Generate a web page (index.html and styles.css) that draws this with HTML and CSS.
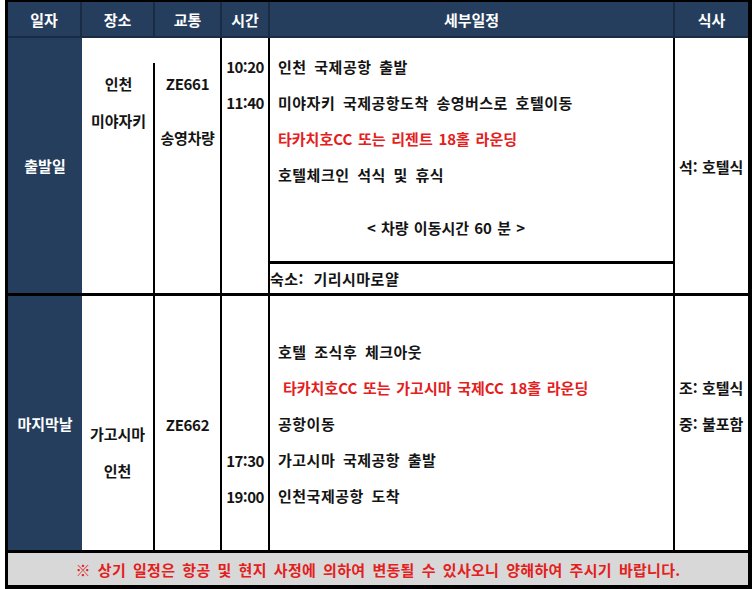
FILE: index.html
```html
<!DOCTYPE html>
<html lang="ko">
<head>
<meta charset="utf-8">
<title>일정표</title>
<link rel="stylesheet" href="styles.css">
</head>
<body>
<div class="sheet">
  <div class="h">일자</div>
  <div class="h">장소</div>
  <div class="h">교통</div>
  <div class="h">시간</div>
  <div class="h">세부일정</div>
  <div class="h h-last">식사</div>

  <div class="day">출발일</div>
  <div class="cell place place-1"><div>인천</div><div>미야자키</div></div>
  <div class="cell trans trans-1"><div>ZE661</div><div class="trans-gap">송영차량</div></div>
  <div class="cell time time-1"><div>10:20</div><div>11:40</div></div>
  <div class="cell detail detail-1">
    <div class="sched">
      <div>인천 국제공항 출발</div>
      <div>미야자키 국제공항도착 송영버스로 호텔이동</div>
      <div class="red">타카치호CC 또는 리젠트 18홀 라운딩</div>
      <div>호텔체크인 석식 및 휴식</div>
      <div class="move">&lt; 차량 이동시간 60 분 &gt;</div>
    </div>
    <div class="lodging">숙소:  기리시마로얄</div>
  </div>
  <div class="cell meal meal-1"><div>석: 호텔식</div></div>

  <div class="day">마지막날</div>
  <div class="cell place place-2"><div>가고시마</div><div>인천</div></div>
  <div class="cell trans trans-2"><div>ZE662</div></div>
  <div class="cell time time-2"><div>17:30</div><div>19:00</div></div>
  <div class="cell detail detail-2">
    <div>호텔 조식후 체크아웃</div>
    <div class="red indent">타카치호CC 또는 가고시마 국제CC 18홀 라운딩</div>
    <div>공항이동</div>
    <div>가고시마 국제공항 출발</div>
    <div>인천국제공항 도착</div>
  </div>
  <div class="cell meal meal-2"><div>조: 호텔식</div><div>중: 불포함</div></div>

  <div class="footer">※ 상기 일정은 항공 및 현지 사정에 의하여 변동될 수 있사오니 양해하여 주시기 바랍니다.</div>
</div>
</body>
</html>
```
FILE: styles.css
```css
html, body {
  margin: 0;
  padding: 0;
  background: #ffffff;
}

body {
  font-family: "Noto Sans CJK KR", "Noto Sans", sans-serif;
  font-weight: 700;
  font-size: 15px;
  color: #141414;
}

.sheet {
  margin-left: 5px;
  width: 740px;
  border-top: 2px solid #000;
  border-left: 3px solid #000;
  border-right: 4px solid #000;
  border-bottom: 4px solid #000;
  display: grid;
  grid-template-columns: 74px 73px 67px 48px 405px 73px;
  grid-template-rows: 36px 258px 257px 32px;
}

.h {
  background: #253e5e;
  color: #ffffff;
  display: flex;
  align-items: center;
  justify-content: center;
  border-right: 2px solid #1a2c44;
  border-bottom: 2px solid #1a2c44;
  box-sizing: border-box;
}

.h-last {
  border-right: none;
}

.day {
  background: #253e5e;
  color: #ffffff;
  display: flex;
  align-items: center;
  justify-content: center;
  border-bottom: 3px solid #000;
  box-sizing: border-box;
}

.cell {
  box-sizing: border-box;
  border-right: 2px solid #000;
  border-bottom: 3px solid #000;
  line-height: 36px;
  white-space: nowrap;
}

.place {
  text-align: center;
  line-height: 37px;
}

.place-1 {
  padding-top: 27px;
  border-right: none;
  background: linear-gradient(#000, #000) no-repeat right bottom / 2px calc(100% - 25px);
}

.place-2 {
  padding-top: 119px;
}

.trans {
  text-align: center;
  letter-spacing: -0.3px;
}

.trans-1 {
  padding-top: 28px;
}

.trans-gap {
  margin-top: 18px;
}

.trans-2 {
  padding-top: 111px;
}

.time {
  text-align: center;
  letter-spacing: -0.6px;
}

.time-1 {
  padding-top: 11px;
}

.time-2 {
  padding-top: 147px;
}

.detail {
  padding-left: 8px;
  letter-spacing: 0.5px;
  word-spacing: 3px;
}

.detail-1 {
  display: flex;
  flex-direction: column;
  padding-left: 0;
}

.sched {
  flex: 1;
  padding-top: 11px;
  padding-left: 8px;
}

.move {
  margin-top: 17px;
  padding-left: 89px;
  letter-spacing: 0;
  word-spacing: 1px;
}

.lodging {
  height: 29px;
  line-height: 29px;
  border-top: 3px solid #000;
  white-space: pre;
  word-spacing: 0;
}

.detail-2 {
  padding-top: 38px;
}

.red {
  color: #e3201c;
  letter-spacing: 0;
  word-spacing: 1.5px;
}

.indent {
  padding-left: 5px;
}

.meal {
  border-right: none;
  padding-left: 4px;
}

.meal-1 {
  padding-top: 111px;
}

.meal-2 {
  padding-top: 74px;
}

.footer {
  grid-column: 1 / -1;
  background: #d8d8d8;
  color: #e3201c;
  display: flex;
  align-items: center;
  justify-content: center;
  letter-spacing: 0.3px;
  word-spacing: 2.5px;
}
```
